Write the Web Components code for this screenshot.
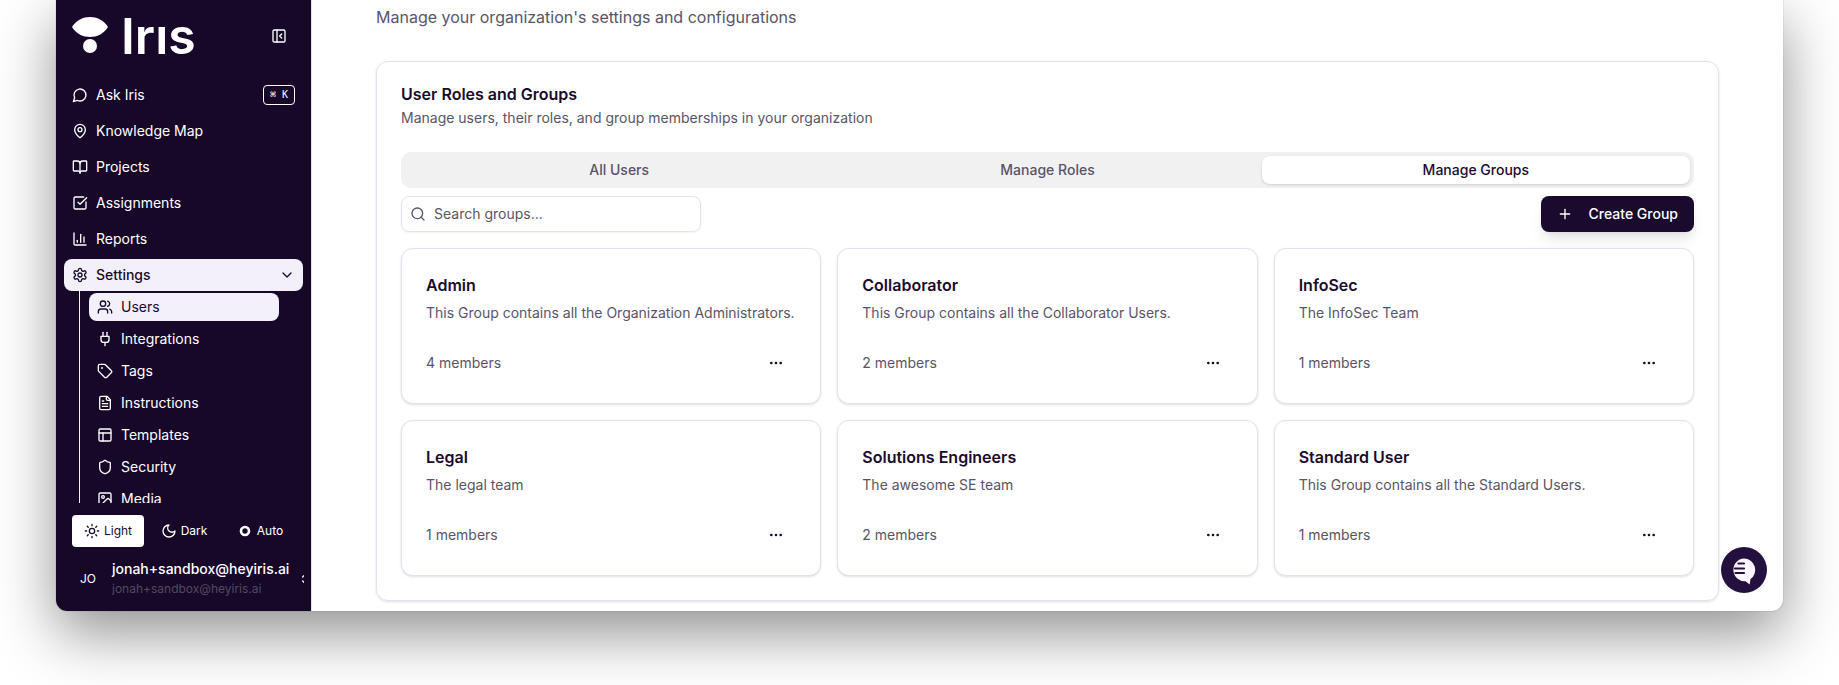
<!DOCTYPE html>
<html lang="en">
<head>
<meta charset="utf-8">
<meta name="viewport" content="width=device-width, initial-scale=1">
<title>Iris - Settings</title>
<style>
  :root {
    --ink: #1a0b2e;
    --sidebar: #170829;
    --accent: #f3f0fa;
    --muted: #5a5468;
    --border: #e4e2ec;
    --tabs: #f1f1f1;
  }
  body {
    box-sizing: border-box;
    min-height: 100vh;
    margin: 0;
    padding: 0 56px 74px;
    background: #fff;
    color: var(--ink);
    font: 14px/20px Inter, "Liberation Sans", sans-serif;
  }
</style>
</head>
<body>
<app-window>
  <side-bar slot="sidebar">
    <nav-item icon="message">Ask Iris<kbd-hint slot="end">⌘ K</kbd-hint></nav-item>
    <nav-item icon="pin">Knowledge Map</nav-item>
    <nav-item icon="book">Projects</nav-item>
    <nav-item icon="check">Assignments</nav-item>
    <nav-item icon="chart">Reports</nav-item>
    <nav-item icon="gear" active>Settings<app-icon slot="end" name="down"></app-icon></nav-item>
    <sub-nav>
      <nav-item icon="users" sub active>Users</nav-item>
      <nav-item icon="plug" sub>Integrations</nav-item>
      <nav-item icon="tag" sub>Tags</nav-item>
      <nav-item icon="file" sub>Instructions</nav-item>
      <nav-item icon="layout" sub>Templates</nav-item>
      <nav-item icon="shield" sub>Security</nav-item>
      <nav-item icon="image" sub>Media</nav-item>
    </sub-nav>
    <theme-switch slot="footer"></theme-switch>
    <user-menu slot="footer" initials="JO" name="jonah+sandbox@heyiris.ai" email="jonah+sandbox@heyiris.ai"></user-menu>
  </side-bar>
  <span slot="intro">Manage your organization's settings and configurations</span>
  <settings-panel>
    <span slot="title">User Roles and Groups</span>
    <span slot="description">Manage users, their roles, and group memberships in your organization</span>
    <tab-list tabs="All Users,Manage Roles,Manage Groups" selected="2"></tab-list>
    <group-toolbar></group-toolbar>
    <group-grid>
      <group-card members="4">Admin<span slot="description">This Group contains all the Organization Administrators.</span></group-card>
      <group-card members="2">Collaborator<span slot="description">This Group contains all the Collaborator Users.</span></group-card>
      <group-card members="1">InfoSec<span slot="description">The InfoSec Team</span></group-card>
      <group-card members="1">Legal<span slot="description">The legal team</span></group-card>
      <group-card members="2">Solutions Engineers<span slot="description">The awesome SE team</span></group-card>
      <group-card members="1">Standard User<span slot="description">This Group contains all the Standard Users.</span></group-card>
    </group-grid>
  </settings-panel>
  <chat-button slot="float"></chat-button>
</app-window>

<script>
// 24x24 stroke icons
const ICONS = {
  message: '<path d="M7.9 20A9 9 0 1 0 4 16.1L2 22Z"/>',
  pin: '<path d="M20 10c0 4.993-5.539 10.193-7.399 11.799a1 1 0 0 1-1.202 0C9.539 20.193 4 14.993 4 10a8 8 0 0 1 16 0"/><circle cx="12" cy="10" r="3"/>',
  book: '<path d="M12 7v14"/><path d="M3 18a1 1 0 0 1-1-1V4a1 1 0 0 1 1-1h5a4 4 0 0 1 4 4 4 4 0 0 1 4-4h5a1 1 0 0 1 1 1v13a1 1 0 0 1-1 1h-6a3 3 0 0 0-3 3 3 3 0 0 0-3-3z"/>',
  check: '<path d="M21 10.5V19a2 2 0 0 1-2 2H5a2 2 0 0 1-2-2V5a2 2 0 0 1 2-2h12.5"/><path d="m9 11 3 3L22 4"/>',
  chart: '<path d="M3 3v16a2 2 0 0 0 2 2h16"/><path d="M18 17V9"/><path d="M13 17V5"/><path d="M8 17v-3"/>',
  gear: '<path d="M12.22 2h-.44a2 2 0 0 0-2 2v.18a2 2 0 0 1-1 1.73l-.43.25a2 2 0 0 1-2 0l-.15-.08a2 2 0 0 0-2.73.73l-.22.38a2 2 0 0 0 .73 2.73l.15.1a2 2 0 0 1 1 1.72v.51a2 2 0 0 1-1 1.74l-.15.09a2 2 0 0 0-.73 2.73l.22.38a2 2 0 0 0 2.73.73l.15-.08a2 2 0 0 1 2 0l.43.25a2 2 0 0 1 1 1.73V20a2 2 0 0 0 2 2h.44a2 2 0 0 0 2-2v-.18a2 2 0 0 1 1-1.73l.43-.25a2 2 0 0 1 2 0l.15.08a2 2 0 0 0 2.73-.73l.22-.39a2 2 0 0 0-.73-2.73l-.15-.08a2 2 0 0 1-1-1.74v-.5a2 2 0 0 1 1-1.74l.15-.09a2 2 0 0 0 .73-2.73l-.22-.38a2 2 0 0 0-2.73-.73l-.15.08a2 2 0 0 1-2 0l-.43-.25a2 2 0 0 1-1-1.73V4a2 2 0 0 0-2-2z"/><circle cx="12" cy="12" r="3"/>',
  down: '<path d="m6 9 6 6 6-6"/>',
  users: '<path d="M16 21v-2a4 4 0 0 0-4-4H6a4 4 0 0 0-4 4v2"/><circle cx="9" cy="7" r="4"/><path d="M22 21v-2a4 4 0 0 0-3-3.87"/><path d="M16 3.13a4 4 0 0 1 0 7.75"/>',
  plug: '<path d="M12 22v-5"/><path d="M9 8V2"/><path d="M15 8V2"/><path d="M18 8v5a4 4 0 0 1-4 4h-4a4 4 0 0 1-4-4V8Z"/>',
  tag: '<path d="M12.586 2.586A2 2 0 0 0 11.172 2H4a2 2 0 0 0-2 2v7.172a2 2 0 0 0 .586 1.414l8.704 8.704a2.426 2.426 0 0 0 3.42 0l6.58-6.58a2.426 2.426 0 0 0 0-3.42z"/><circle cx="7.5" cy="7.5" r=".5" fill="currentColor"/>',
  file: '<path d="M15 2H6a2 2 0 0 0-2 2v16a2 2 0 0 0 2 2h12a2 2 0 0 0 2-2V7Z"/><path d="M14 2v4a2 2 0 0 0 2 2h4"/><path d="M10 9H8"/><path d="M16 13H8"/><path d="M16 17H8"/>',
  layout: '<rect x="3" y="3" width="18" height="18" rx="2"/><path d="M3 9h18"/><path d="M9 21V9"/>',
  shield: '<path d="M20 13c0 5-3.5 7.5-7.66 8.95a1 1 0 0 1-.67-.01C7.5 20.5 4 18 4 13V6a1 1 0 0 1 1-1c2 0 4.5-1.2 6.24-2.72a1.17 1.17 0 0 1 1.52 0C14.51 3.81 17 5 19 5a1 1 0 0 1 1 1z"/>',
  image: '<rect x="3" y="3" width="18" height="18" rx="2"/><circle cx="9" cy="9" r="2"/><path d="m21 15-3.086-3.086a2 2 0 0 0-2.828 0L6 21"/>',
  panel: '<rect x="3" y="3" width="18" height="18" rx="2"/><path d="M9 3v18"/><path d="m16 15-3-3 3-3"/>',
  sun: '<circle cx="12" cy="12" r="4"/><path d="M12 2v2M12 20v2M4.93 4.93l1.41 1.41M17.66 17.66l1.41 1.41M2 12h2M20 12h2M6.34 17.66l-1.41 1.41M19.07 4.93l-1.41 1.41"/>',
  moon: '<path d="M12 3a6 6 0 0 0 9 9 9 9 0 1 1-9-9Z"/>',
  ring: '<circle cx="12" cy="12" r="6" stroke-width="4"/>',
  updown: '<path d="m7 15 5 5 5-5"/><path d="m7 9 5-5 5 5"/>',
  search: '<circle cx="11" cy="11" r="8"/><path d="m21 21-4.3-4.3"/>',
  plus: '<path d="M5 12h14"/><path d="M12 5v14"/>',
  dots: '<g fill="currentColor"><circle cx="12" cy="12" r="1"/><circle cx="19" cy="12" r="1"/><circle cx="5" cy="12" r="1"/></g>'
};

// shared by all components: attaches the shadow root and fills it
class BaseElement extends HTMLElement {
  constructor() {
    super();
    this.attachShadow({ mode: "open" });
  }

  connectedCallback() {
    const template = document.createElement("template");
    template.innerHTML = this.render();
    this.shadowRoot.replaceChildren(template.content.cloneNode(true));
  }
}

class AppIcon extends BaseElement {
  render() {
    return /* html */ `
      <style>
        :host { display: block; flex: none; width: 16px; height: 16px; }
        svg { display: block; width: 100%; height: 100%; }
      </style>
      <svg viewBox="0 0 24 24" fill="none" stroke="currentColor" stroke-width="2"
        stroke-linecap="round" stroke-linejoin="round" aria-hidden="true">${ICONS[this.getAttribute("name")]}</svg>`;
  }
}

class AppWindow extends BaseElement {
  render() {
    return /* html */ `
      <style>
        :host {
          position: relative;
          display: flex;
          height: calc(100vh - 74px);
          background: #fff;
          border-radius: 0 0 11px 11px;
          box-shadow: 0 0 1px rgba(0, 0, 0, .5), 0 22px 60px rgba(0, 0, 0, .44);
        }
        main {
          flex: 1;
          min-width: 0;
          padding: 5px 64px 0;
        }
        p {
          margin: 0 0 32px;
          color: var(--muted);
          font-size: 16px;
          line-height: 24px;
        }
      </style>
      <slot name="sidebar"></slot>
      <main>
        <p><slot name="intro"></slot></p>
        <slot></slot>
      </main>
      <slot name="float"></slot>`;
  }
}

class SideBar extends BaseElement {
  render() {
    return /* html */ `
      <style>
        :host {
          display: flex;
          flex: none;
          flex-direction: column;
          box-sizing: border-box;
          width: 256px;
          background: var(--sidebar);
          border-right: 1px solid var(--border);
          border-bottom-left-radius: 11px;
          color: #fff;
          overflow: hidden;
        }
        header {
          display: flex;
          align-items: center;
          justify-content: space-between;
          height: 71px;
          padding: 0 16px;
        }
        .brand {
          display: flex;
          align-items: center;
          gap: 13px;
          font-size: 50px;
          line-height: 72px;
          font-weight: 600;
        }
        .brand svg { width: 36px; height: 37px; }
        button {
          display: grid;
          place-items: center;
          width: 32px;
          height: 32px;
          padding: 0;
          border: 0;
          background: none;
          color: inherit;
        }
        nav {
          flex: 1;
          min-height: 0;
          display: flex;
          flex-direction: column;
          gap: 4px;
          padding: 8px 8px 0;
          overflow: hidden;
        }
        footer {
          display: grid;
          gap: 8px;
          padding: 12px 8px 8px;
        }
      </style>
      <header>
        <div class="brand" role="img" aria-label="Iris">
          <svg viewBox="0 0 36 37" fill="#fff"><path d="M0 10C4.500 3 11 0 18 0s13.500 3 18 10c-4.500 7-11 10-18 10S4.500 17 0 10Z"/><circle cx="18" cy="29" r="7"/></svg>
          <span>Irıs</span>
        </div>
        <button aria-label="Collapse sidebar"><app-icon name="panel"></app-icon></button>
      </header>
      <nav><slot></slot></nav>
      <footer><slot name="footer"></slot></footer>`;
  }
}

class NavItem extends BaseElement {
  render() {
    return /* html */ `
      <style>
        :host { display: block; flex: none; }
        a {
          display: flex;
          align-items: center;
          gap: 8px;
          box-sizing: border-box;
          height: 32px;
          padding: 0 8px;
          border-radius: 8px;
          color: #fff;
          text-decoration: none;
        }
        :host([sub]) a { height: 28px; }
        :host([active]) a { background: var(--accent); color: var(--ink); }
        :host([active]:not([sub])) a { font-weight: 500; }
        .label { flex: 1; }
      </style>
      <a href="#"><app-icon name="${this.getAttribute("icon")}"></app-icon><span class="label"><slot></slot></span><slot name="end"></slot></a>`;
  }
}

class SubNav extends BaseElement {
  render() {
    return /* html */ `
      <style>
        :host {
          display: flex;
          flex: none;
          flex-direction: column;
          gap: 4px;
          margin: -4px 24px 0 15px;
          padding: 2px 0 2px 9px;
          border-left: 1px solid var(--accent);
        }
      </style>
      <slot></slot>`;
  }
}

class KbdHint extends BaseElement {
  render() {
    return /* html */ `
      <style>
        :host { display: block; }
        kbd {
          display: block;
          padding: 0 6px;
          border: 1px solid #fff;
          border-radius: 4px;
          font: 10px/18px "DejaVu Sans Mono", monospace;
        }
      </style>
      <kbd><slot></slot></kbd>`;
  }
}

class ThemeSwitch extends BaseElement {
  render() {
    const button = (icon, label) =>
      `<button aria-pressed="${label === "Light"}"><app-icon name="${icon}"></app-icon>${label}</button>`;
    return /* html */ `
      <style>
        :host {
          display: grid;
          grid-template-columns: repeat(3, 72px);
          gap: 4px;
          padding: 0 8px;
        }
        button {
          display: flex;
          align-items: center;
          justify-content: center;
          gap: 4px;
          height: 32px;
          padding: 0;
          border: 0;
          border-radius: 4px;
          background: none;
          color: #fff;
          font: 12px/16px Inter, sans-serif;
        }
        button[aria-pressed="true"] { background: #fff; color: var(--ink); }
      </style>
      ${button("sun", "Light")}${button("moon", "Dark")}${button("ring", "Auto")}`;
  }
}

class UserMenu extends BaseElement {
  render() {
    return /* html */ `
      <style>
        :host { display: block; min-width: 0; overflow: hidden; }
        button {
          display: flex;
          align-items: center;
          gap: 8px;
          width: 100%;
          height: 48px;
          padding: 0 8px;
          border: 0;
          background: none;
          color: #fff;
          font: inherit;
          text-align: left;
        }
        .avatar { flex: none; width: 32px; font-size: 12px; text-align: center; }
        .info { display: grid; flex: none; width: 178px; }
        .name { font-weight: 500; }
        .email { color: #524a5f; font-size: 12px; }
      </style>
      <button>
        <span class="avatar">${this.getAttribute("initials")}</span>
        <span class="info">
          <span class="name">${this.getAttribute("name")}</span>
          <span class="email">${this.getAttribute("email")}</span>
        </span>
        <app-icon name="updown"></app-icon>
      </button>`;
  }
}

class SettingsPanel extends BaseElement {
  render() {
    return /* html */ `
      <style>
        :host {
          display: block;
          padding: 24px;
          border: 1px solid var(--border);
          border-radius: 12px;
          box-shadow: 0 1px 3px rgba(0, 0, 0, .1), 0 1px 2px -1px rgba(0, 0, 0, .1);
        }
        h2 { margin: 0 0 6px; font-size: 16px; line-height: 16px; font-weight: 600; }
        p { margin: 0 0 24px; color: var(--muted); }
      </style>
      <h2><slot name="title"></slot></h2>
      <p><slot name="description"></slot></p>
      <slot></slot>`;
  }
}

class TabList extends BaseElement {
  render() {
    const selected = Number(this.getAttribute("selected"));
    const tabs = this.getAttribute("tabs").split(",");
    return /* html */ `
      <style>
        :host {
          display: grid;
          grid-template-columns: repeat(3, 1fr);
          padding: 4px;
          margin-bottom: 8px;
          border-radius: 10px;
          background: var(--tabs);
        }
        button {
          height: 28px;
          border: 0;
          border-radius: 8px;
          background: none;
          color: var(--muted);
          font: inherit;
          font-weight: 500;
        }
        button[aria-selected="true"] {
          background: #fff;
          color: var(--ink);
          box-shadow: 0 1px 3px rgba(0, 0, 0, .12), 0 1px 2px -1px rgba(0, 0, 0, .1);
        }
      </style>
      ${tabs.map((tab, i) => `<button role="tab" aria-selected="${i === selected}">${tab}</button>`).join("")}`;
  }

  connectedCallback() {
    super.connectedCallback();
    this.setAttribute("role", "tablist");
  }
}

class GroupToolbar extends BaseElement {
  render() {
    return /* html */ `
      <style>
        :host {
          display: flex;
          justify-content: space-between;
          margin-bottom: 16px;
        }
        label {
          display: flex;
          align-items: center;
          gap: 8px;
          box-sizing: border-box;
          width: 300px;
          height: 36px;
          padding: 0 8px;
          border: 1px solid var(--border);
          border-radius: 8px;
          box-shadow: 0 1px 2px rgba(0, 0, 0, .05);
          color: var(--muted);
        }
        input {
          flex: 1;
          min-width: 0;
          padding: 0;
          border: 0;
          outline: 0;
          background: none;
          color: var(--ink);
          font: inherit;
        }
        input::placeholder { color: var(--muted); opacity: 1; }
        button {
          display: flex;
          align-items: center;
          gap: 16px;
          height: 36px;
          padding: 0 16px;
          border: 0;
          border-radius: 8px;
          background: var(--ink);
          box-shadow: 0 10px 15px -3px rgba(0, 0, 0, .1), 0 4px 6px -4px rgba(0, 0, 0, .1);
          color: #fff;
          font: inherit;
          font-weight: 500;
        }
      </style>
      <label><app-icon name="search"></app-icon><input type="text" placeholder="Search groups..." aria-label="Search groups"></label>
      <button><app-icon name="plus"></app-icon>Create Group</button>`;
  }
}

class GroupGrid extends BaseElement {
  render() {
    return /* html */ `
      <style>
        :host { display: grid; grid-template-columns: repeat(3, 1fr); gap: 16px; }
      </style>
      <slot></slot>`;
  }
}

class GroupCard extends BaseElement {
  render() {
    return /* html */ `
      <style>
        :host {
          display: block;
          padding: 24px;
          background: #fff;
          border: 1px solid var(--border);
          border-radius: 12px;
          box-shadow: 0 1px 3px rgba(0, 0, 0, .1), 0 1px 2px -1px rgba(0, 0, 0, .1);
        }
        h3 { margin: 0 0 6px; font-size: 16px; line-height: 24px; font-weight: 600; }
        p { margin: 0 0 24px; color: var(--muted); white-space: nowrap; }
        footer { display: flex; align-items: center; justify-content: space-between; color: var(--muted); }
        button {
          display: grid;
          place-items: center;
          width: 40px;
          height: 32px;
          padding: 0;
          border: 0;
          background: none;
          color: var(--ink);
        }
      </style>
      <h3><slot></slot></h3>
      <p><slot name="description"></slot></p>
      <footer>
        <span>${this.getAttribute("members")} members</span>
        <button aria-label="Group actions"><app-icon name="dots"></app-icon></button>
      </footer>`;
  }
}

class ChatButton extends BaseElement {
  render() {
    return /* html */ `
      <style>
        :host { position: absolute; right: 16px; bottom: 18px; }
        button {
          display: block;
          width: 46px;
          height: 46px;
          padding: 0;
          border: 0;
          border-radius: 50%;
          background: #23103f;
        }
        svg { display: block; }
      </style>
      <button aria-label="Open chat">
        <svg width="46" height="46" viewBox="0 0 46 46" fill="#fdf5ff">
          <path d="M23 11.500a11.300 11.300 0 0 1 6.500 20.500l-.8 5.500-4.200-3.300a11.300 11.300 0 1 1-1.500-22.700Z"/>
          <path d="M17.500 16.500h5.500M14 21.500h9M14.500 26h8.500" stroke="#23103f" stroke-width="2.200" stroke-linecap="round"/>
        </svg>
      </button>`;
  }
}

customElements.define("app-icon", AppIcon);
customElements.define("kbd-hint", KbdHint);
customElements.define("nav-item", NavItem);
customElements.define("sub-nav", SubNav);
customElements.define("theme-switch", ThemeSwitch);
customElements.define("user-menu", UserMenu);
customElements.define("side-bar", SideBar);
customElements.define("tab-list", TabList);
customElements.define("group-toolbar", GroupToolbar);
customElements.define("group-card", GroupCard);
customElements.define("group-grid", GroupGrid);
customElements.define("settings-panel", SettingsPanel);
customElements.define("chat-button", ChatButton);
customElements.define("app-window", AppWindow);
</script>
</body>
</html>
